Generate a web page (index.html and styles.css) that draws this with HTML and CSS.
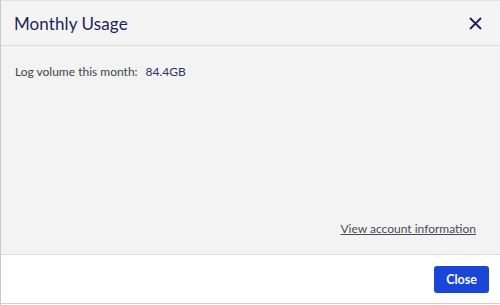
FILE: index.html
```html
<!DOCTYPE html>
<html>
<head>
<meta charset="utf-8">
<link rel="stylesheet" href="styles.css">
</head>
<body>
<div class="modal">
  <div class="modal-header">
    <h1 class="title">Monthly Usage</h1>
    <button class="close-x" aria-label="Close">
      <svg width="13" height="13" viewBox="0 0 13 13"><path d="M1 1 L12 12 M12 1 L1 12" stroke="#1c1f5c" stroke-width="1.8" fill="none"/></svg>
    </button>
  </div>
  <div class="modal-body">
    <div class="usage"><span class="label">Log volume this month:</span><span class="value">84.4GB</span></div>
    <div class="link-row"><a class="link" href="#">View account information</a></div>
  </div>
  <div class="modal-footer">
    <button class="btn-close">Close</button>
  </div>
</div>
</body>
</html>
```
FILE: styles.css
```css
html, body {
  margin: 0;
  padding: 0;
  background: #ffffff;
  font-family: "Lato", "Open Sans", sans-serif;
}
.modal {
  width: 500px;
  height: 305px;
  box-sizing: border-box;
  border-top: 1px solid #e2e2e2;
  border-left: 1px solid #c9c9c9;
  display: flex;
  flex-direction: column;
}
.modal-header {
  height: 44px;
  background: #f4f4f4;
  border-bottom: 1px solid #dcdcdc;
  display: flex;
  align-items: center;
  justify-content: space-between;
  padding: 0 18px 0 13px;
}
.title {
  margin: 0;
  font-size: 17px;
  font-weight: 400;
  color: #1c1f5c;
  letter-spacing: 0.1px;
  padding-top: 1px;
}
.close-x {
  border: 0;
  background: none;
  padding: 0;
  width: 13px;
  height: 13px;
  display: flex;
}
.modal-body {
  height: 209px;
  background: #f3f3f3;
  border-bottom: 1px solid #dcdcdc;
  padding: 18px 24px 0 14px;
  box-sizing: border-box;
  display: flex;
  flex-direction: column;
}
.usage {
  font-size: 12px;
  color: #444;
}
.value {
  margin-left: 8px;
  color: #2f3468;
}
.link-row {
  margin-top: auto;
  margin-bottom: 18px;
  text-align: right;
}
.link {
  font-size: 12px;
  color: #4a4a55;
  text-decoration: underline;
}
.modal-footer {
  flex: 1;
  background: #fff;
  border-bottom: 1px solid #d0d0d0;
  display: flex;
  align-items: center;
  justify-content: flex-end;
  padding: 0 11px 0 0;
  margin-bottom: 1px;
}
.btn-close {
  width: 55px;
  height: 27px;
  border: 0;
  border-radius: 3px;
  background: #1a46d8;
  color: #fff;
  font-family: "Lato", "Open Sans", sans-serif;
  font-size: 12.5px;
  font-weight: 700;
  padding: 0;
}
```
